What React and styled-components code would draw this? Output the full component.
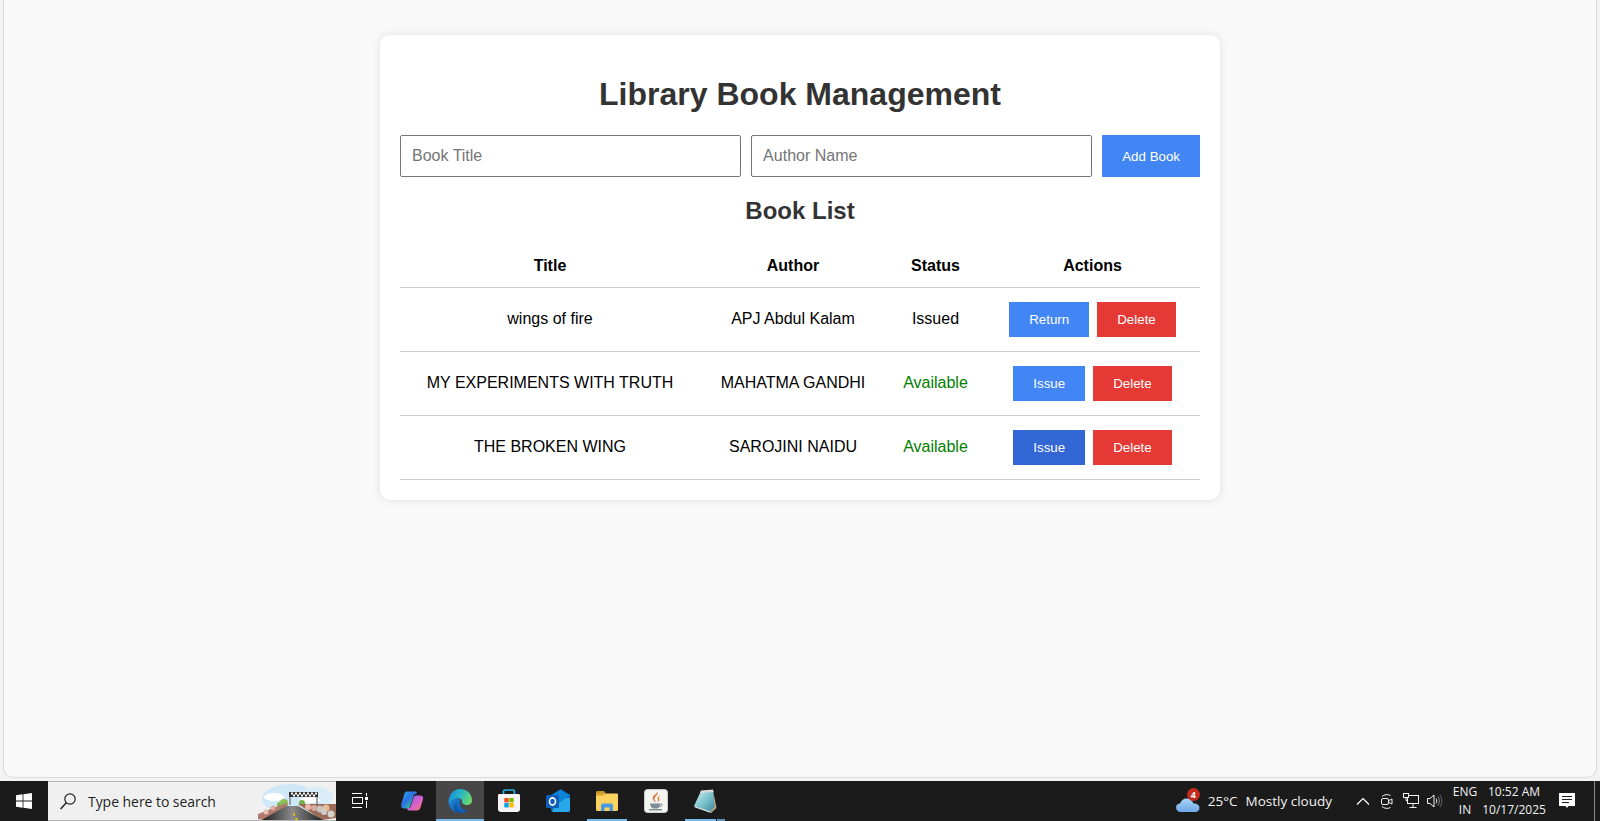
import React from 'react';
import styled, { createGlobalStyle } from 'styled-components';

const GlobalStyle = createGlobalStyle`
  html, body, #root { height: 100%; }
  body {
    margin: 0;
    overflow: hidden;
    background-color: #f3f3f3;
    font-family: "Liberation Sans", Arial, sans-serif;
  }
`;

const Screen = styled.div`
  display: flex;
  flex-direction: column;
  height: 100%;
`;

const BrowserView = styled.main`
  flex: 1;
  margin: 0 3px 3px;
  border: 1px solid #dcdcdc;
  border-top: none;
  border-radius: 0 0 10px 10px;
  padding-top: 35px;
  background-color: #f9f9f9;
`;

const Card = styled.section`
  box-sizing: border-box;
  width: 840px;
  margin: 0 auto;
  border-radius: 10px;
  padding: 20px;
  background-color: #fff;
  box-shadow: 0 0 10px rgba(0, 0, 0, 0.1);
`;

const Title = styled.h1`
  margin: 21px 0 22px;
  font-size: 32px;
  line-height: 37px;
  text-align: center;
  color: #333;
`;

const AddForm = styled.form`
  display: flex;
  gap: 10px;
`;

const TextInput = styled.input`
  flex: 1;
  min-width: 0;
  box-sizing: border-box;
  height: 42px;
  border: 1px solid #767676;
  border-radius: 2px;
  padding: 10px 11px;
  font-family: inherit;
  font-size: 16px;
  background-color: #fff;

  &::placeholder { color: #757575; }
`;

const Button = styled.button`
  border: none;
  padding: 10px 20px;
  font-family: inherit;
  font-size: 13.33px;
  line-height: 15px;
  color: #fff;
  background-color: ${props => props.$bg};
`;

const SubTitle = styled.h2`
  margin: 20px 0 20px;
  font-size: 24px;
  line-height: 28px;
  text-align: center;
  color: #333;
`;

const Table = styled.table`
  width: 800px;
  table-layout: fixed;
  border-collapse: collapse;
  font-size: 16px;
  color: #000;
`;

const HeadCell = styled.th`
  width: ${props => props.$width}px;
  border-bottom: 1px solid #ccc;
  padding: 12px 0 12px;
  line-height: 18px;
  text-align: center;
`;

const Cell = styled.td`
  border-bottom: 1px solid #ccc;
  padding: 14px 0 16px;
  line-height: 18px;
  text-align: center;
  color: ${props => props.$color || '#000'};
`;

const ActionCell = styled.td`
  border-bottom: 1px solid #ccc;
  padding: 14px 0;
`;

const Actions = styled.div`
  display: flex;
  justify-content: center;
  gap: 8px;
`;

const Taskbar = styled.footer`
  display: flex;
  flex: none;
  align-items: stretch;
  height: 40px;
  font-family: "Open Sans", "Noto Sans", sans-serif;
  color: #f2f2f2;
  background-color: #1b1b1b;
`;

const TaskSlot = styled.div`
  position: relative;
  display: flex;
  flex: none;
  align-items: center;
  justify-content: center;
  box-sizing: border-box;
  width: ${props => props.$width || 49}px;
  padding-right: ${props => props.$padRight || 0}px;
  background-color: ${props => (props.$active ? '#474747' : 'transparent')};

  &::after {
    content: '';
    display: ${props => (props.$open ? 'block' : 'none')};
    position: absolute;
    left: ${props => (props.$active ? 0 : 5)}px;
    right: ${props => (props.$active ? 0 : 4)}px;
    bottom: 0;
    height: 2px;
    background: ${props => (props.$stacked
      ? 'linear-gradient(to right, #76b9ed 78%, #1b1b1b 78%, #1b1b1b 80%, #5d95c0 80%)'
      : '#76b9ed')};
  }
`;

const SearchBox = styled.div`
  display: flex;
  flex: none;
  align-items: center;
  justify-content: space-between;
  box-sizing: border-box;
  width: 288px;
  border-top: 1px solid #b5b5b5;
  border-bottom: 1px solid #b5b5b5;
  background-color: #f0f0f0;
`;

const SearchLabel = styled.div`
  display: flex;
  align-items: center;
  gap: 12px;
  padding-left: 12px;
  font-size: 14px;
  letter-spacing: -0.05px;
  color: #1f1f1f;
`;

const Spacer = styled.div`
  flex: 1;
`;

const Weather = styled.div`
  display: flex;
  flex: none;
  align-items: center;
  padding-right: 19px;
  font-size: 13.5px;
`;

const WeatherIcon = styled.div`
  position: relative;
  width: 24px;
  height: 24px;
  margin-right: 8px;
`;

const WeatherBadge = styled.span`
  position: absolute;
  top: -1px;
  right: 0;
  width: 13px;
  height: 13px;
  border-radius: 50%;
  font-size: 9px;
  font-weight: 700;
  line-height: 13px;
  text-align: center;
  color: #fff;
  background-color: #c42b1c;
`;

const WeatherTemp = styled.span`
  margin-right: 8px;
`;

const TrayIcon = styled.div`
  display: flex;
  flex: none;
  align-items: center;
  justify-content: center;
  width: 24px;
`;

const Stack = styled.div`
  display: flex;
  flex: none;
  flex-direction: column;
  align-items: center;
  justify-content: center;
  gap: 2px;
  width: ${props => props.$width}px;
  font-size: 12px;
  line-height: 16px;
`;

const Notify = styled.div`
  display: flex;
  flex: none;
  align-items: center;
  justify-content: center;
  width: 44px;
`;

const ShowDesktop = styled.div`
  flex: none;
  width: 5px;
  margin-left: 5px;
  border-left: 1px solid #8a8a8a;
`;

const WindowsLogo = () => (
  <svg width="16" height="16" viewBox="0 0 16 16" fill="#fff">
    <polygon points="0,2.3 6.6,1.3 6.6,7.6 0,7.6" />
    <polygon points="7.4,1.2 16,0 16,7.6 7.4,7.6" />
    <polygon points="0,8.4 6.6,8.4 6.6,14.7 0,13.7" />
    <polygon points="7.4,8.4 16,8.4 16,16 7.4,14.8" />
  </svg>
);

const SearchGlyph = () => (
  <svg width="16" height="17" viewBox="0 0 16 17" fill="none" stroke="#1f1f1f" strokeWidth="1.2">
    <circle cx="10" cy="6" r="5.2" />
    <line x1="6.3" y1="9.8" x2="0.6" y2="16" strokeWidth="1.5" />
  </svg>
);

const SearchBanner = () => (
  <svg width="78" height="38" viewBox="8 1 78 38">
    <ellipse cx="40" cy="18" rx="28" ry="15" fill="#cfe8f8" />
    <ellipse cx="66" cy="16" rx="17" ry="10" fill="#d8edf9" />
    <ellipse cx="24" cy="16" rx="10" ry="4" fill="#fff" />
    <ellipse cx="60" cy="19" rx="10" ry="3" fill="#fff" />
    <circle cx="30" cy="24" r="3" fill="#7ab648" />
    <circle cx="34" cy="22" r="4" fill="#8cc152" />
    <circle cx="52" cy="22" r="3" fill="#6fb045" />
    <line x1="40" y1="12" x2="40" y2="24" stroke="#555" strokeWidth="1" />
    <line x1="67" y1="12" x2="67" y2="24" stroke="#555" strokeWidth="1" />
    <rect x="39" y="11" width="29" height="5" fill="#333" />
    {[41, 45, 49, 53, 57, 61, 65].map(x => <rect key={x} x={x} y="11.5" width="2" height="2" fill="#fff" />)}
    {[43, 47, 51, 55, 59, 63].map(x => <rect key={x} x={x} y="13.5" width="2" height="2" fill="#fff" />)}
    <polygon points="8,38 8,33 36,22 38,24 14,39" fill="#b07a6c" />
    <polygon points="48,23 86,23 86,37 72,39" fill="#9a6a58" />
    {[[58, 26, 3, '#e6b7a6'], [64, 27, 3, '#d9a9a0'], [70, 28, 3.5, '#c9c4c0'], [76, 27, 3.5, '#e5bc96'], [81, 33, 3.5, '#d4d2cc'], [74, 31, 3, '#cfcdc8'], [16, 31, 2.5, '#e7c3b5'], [23, 27, 2.5, '#dca99b']].map(([x, y, r, c]) => (
      <circle key={x} cx={x} cy={y} r={r} fill={c} />
    ))}
    <defs>
      <linearGradient id="roadFill" x1="0" x2="1" y1="0" y2="0">
        <stop offset="0" stopColor="#181818" />
        <stop offset="0.5" stopColor="#8a8a8a" />
        <stop offset="1" stopColor="#181818" />
      </linearGradient>
    </defs>
    <polygon points="10,40 36,25 48,25 75,40" fill="url(#roadFill)" />
    <rect x="43.5" y="32" width="1.5" height="3" fill="#f2c400" />
    <rect x="45.5" y="37" width="2" height="3" fill="#f2c400" />
  </svg>
);

const TaskViewIcon = () => (
  <svg width="16" height="16" viewBox="0 0 16 16" fill="none" stroke="#fff" strokeWidth="1">
    <path d="M0 0.5H10M0 14.5H10" />
    <rect x="0.5" y="4.5" width="10" height="6" />
    <path d="M14.5 0V3M14.5 8V15" />
    <rect x="13" y="4" width="3" height="3" fill="#fff" stroke="none" />
  </svg>
);

const CopilotIcon = () => (
  <svg width="24" height="24" viewBox="0 0 24 24">
    <defs>
      <linearGradient id="copilotA" x1="0" y1="0" x2="1" y2="1">
        <stop offset="0" stopColor="#22b5e8" />
        <stop offset="0.45" stopColor="#2c6fe6" />
        <stop offset="0.8" stopColor="#36c98c" />
        <stop offset="1" stopColor="#f2d14a" />
      </linearGradient>
      <linearGradient id="copilotB" x1="0" y1="0" x2="1" y2="1">
        <stop offset="0" stopColor="#7a5ce8" />
        <stop offset="0.5" stopColor="#d060d0" />
        <stop offset="0.8" stopColor="#f06a9a" />
        <stop offset="1" stopColor="#f9a14c" />
      </linearGradient>
    </defs>
    <path d="M7 2.5H15.5C16.8 2.5 17 3.6 16.4 4.8C14.8 4.6 13.8 5.6 13.2 7.2L10.8 15.5C10.2 18 9 19.5 7 19.5H4C1.8 19.5 0.6 18 1.2 15.8L4 6C4.6 3.8 5.6 2.5 7 2.5Z" fill="url(#copilotA)" />
    <path d="M16 6.5H20C22.4 6.5 23.6 8 23 10.2L20.5 18.5C19.8 20.6 18.6 21.5 17 21.5H8.5C7.2 21.5 7 20.4 7.6 19.2C9.4 19.4 10.4 18.4 11 16.8L13.4 8.6C13.8 7.2 14.6 6.5 16 6.5Z" fill="url(#copilotB)" />
  </svg>
);

const EdgeIcon = () => (
  <svg width="24" height="24" viewBox="0 0 24 24">
    <defs>
      <linearGradient id="edgeTop" x1="0" y1="0.3" x2="1" y2="0.6">
        <stop offset="0" stopColor="#1a8fd8" />
        <stop offset="0.45" stopColor="#25b3c8" />
        <stop offset="1" stopColor="#6fdc6a" />
      </linearGradient>
      <linearGradient id="edgeLow" x1="0" y1="0" x2="1" y2="1">
        <stop offset="0" stopColor="#1c86d4" />
        <stop offset="1" stopColor="#0f56ad" />
      </linearGradient>
    </defs>
    <path d="M12 0C19 0 24 5 24 11.5C24 14.5 21 16.5 18 16C15 15.5 13.5 14 14 12C14.4 10 11 8.5 8 9.5C4 10.8 2 14 1 16C-1 8 4.5 0 12 0Z" fill="url(#edgeTop)" />
    <path d="M1 16C2 12.5 5 9.5 9 9.5C11.5 9.5 12.8 10.8 12.2 12.5C10.8 16 13 20.5 19.5 21.5C17.5 23.2 15 24 12 24C7 24 2.6 20.8 1 16Z" fill="url(#edgeLow)" />
    <path d="M9 12.5C7.5 16 9 20.5 13.5 23.8C12.5 24 10.5 24 9 23.6C5.5 21.5 4.5 16 9 12.5Z" fill="#0b4796" opacity="0.55" />
  </svg>
);

const StoreIcon = () => (
  <svg width="24" height="24" viewBox="0 0 24 24">
    <path d="M6.5 6V2.5C6.5 1.6 7 1 8 1H16C17 1 17.5 1.6 17.5 2.5V6" fill="none" stroke="#2ab0e8" strokeWidth="1.7" />
    <path d="M1 6.5C1 5.7 1.5 5 2.3 5H21.7C22.5 5 23 5.7 23 6.5V20C23 22 22 23 20 23H4C2 23 1 22 1 20Z" fill="#f4f4f4" />
    <rect x="7.3" y="9" width="4.4" height="4.4" fill="#f25022" />
    <rect x="12.3" y="9" width="4.4" height="4.4" fill="#7fba00" />
    <rect x="7.3" y="14" width="4.4" height="4.4" fill="#00a4ef" />
    <rect x="12.3" y="14" width="4.4" height="4.4" fill="#ffb900" />
  </svg>
);

const OutlookIcon = () => (
  <svg width="24" height="24" viewBox="0 0 24 24">
    <path d="M5 6L14 0.5C14.6 0.2 15 0.2 15.6 0.5L24 6V21C24 22.2 23 23 22 23H8C6.5 23 5 22 5 20Z" fill="#0f6cbd" />
    <path d="M14 9H24V21C24 22.2 23 23 22 23H8C7 23 6.4 22.6 6 22Z" fill="#28a8ea" />
    <path d="M24 6L13 14L8 10V5L14 1L24 6Z" fill="#0a86d8" />
    <rect x="0" y="6" width="13" height="13" rx="1" fill="#0f5fb8" />
    <ellipse cx="6.5" cy="12.5" rx="3" ry="3.6" fill="none" stroke="#fff" strokeWidth="1.6" />
  </svg>
);

const ExplorerIcon = () => (
  <svg width="22" height="20" viewBox="0 0 22 20">
    <path d="M0 1.5C0 0.6 0.6 0 1.5 0H8L10 2.5H0Z" fill="#c99526" />
    <path d="M0 2.5H21C21.6 2.5 22 3 22 3.6V18.5C22 19.4 21.4 20 20.5 20H1.5C0.6 20 0 19.4 0 18.5Z" fill="#fbd25f" />
    <path d="M0 2.5H9L7 5H0Z" fill="#e6ac33" />
    <path d="M5 20V14.5C5 13.2 5.8 12.5 7 12.5H15C16.2 12.5 17 13.2 17 14.5V20H13.5V16.5H8.5V20Z" fill="#4a9ae0" />
  </svg>
);

const JavaIcon = () => (
  <svg width="24" height="24" viewBox="0 0 24 24">
    <rect x="0.5" y="0.5" width="23" height="23" rx="3" fill="#f5f5f0" stroke="#c8ccd0" />
    <path d="M13.5 2.5C15 6 9.5 7.5 10.5 10.5C11 11.8 12 12.6 12.4 13.4C10.6 12.4 8.4 10.8 8.8 8.4C9.2 6 13 5.4 13.5 2.5Z" fill="#e0652a" />
    <path d="M16 6C14 7.2 13 8.8 13.6 10.4C14 11.4 14 12.4 13.4 13.4C15.4 12.2 15.8 11 15.2 9.6C14.8 8.4 15 7.2 16 6Z" fill="#e88a45" />
    <path d="M6 14.5H16.5C16.5 17.2 15 18.8 13.5 19.4H9C7.5 18.8 6 17.2 6 14.5Z" fill="#7d8c97" />
    <path d="M16.5 14.8C19 14.2 19.4 16.8 15.6 17.8" fill="none" stroke="#7d8c97" strokeWidth="1" />
    <path d="M5 20.8H18" stroke="#65757f" strokeWidth="1.2" />
  </svg>
);

const NotepadIcon = () => (
  <svg width="24" height="24" viewBox="0 0 24 24">
    <defs>
      <linearGradient id="padFill" x1="0" y1="0" x2="1" y2="1">
        <stop offset="0" stopColor="#d4eff0" />
        <stop offset="0.5" stopColor="#7ec6cf" />
        <stop offset="1" stopColor="#37859b" />
      </linearGradient>
    </defs>
    <polygon points="8,2 20,1 22,18 17,23 1,17" fill="url(#padFill)" />
    <polygon points="8,1.5 20,0.5 20.5,3 7,4" fill="#d8d8d8" />
    <polygon points="20,1 23.5,19 18,24 18,21.5 21.5,18" fill="#b9a684" />
    <polygon points="1,17 17.5,22.5 18,24 2,18.5" fill="#e8e8e8" />
  </svg>
);

const CloudIcon = () => (
  <svg width="24" height="24" viewBox="0 0 24 24">
    <defs>
      <linearGradient id="cloudFill" x1="0" y1="0" x2="0" y2="1">
        <stop offset="0" stopColor="#a9d3f8" />
        <stop offset="1" stopColor="#6ea8e6" />
      </linearGradient>
    </defs>
    <path d="M5 23C2 23 0 21 0 18.5C0 16 2 14.5 4 14.5C5 11.5 7.5 9.5 10.5 9.5C14 9.5 16.5 11.5 17.5 14.5C20 14 23.5 15.5 23.5 19C23.5 21.5 21.5 23 19.5 23Z" fill="url(#cloudFill)" />
  </svg>
);

const ChevronIcon = () => (
  <svg width="14" height="8" viewBox="0 0 14 8" fill="none" stroke="#fff" strokeWidth="1.2">
    <path d="M1 7.5L7 1.5L13 7.5" />
  </svg>
);

const MeetIcon = () => (
  <svg width="12" height="17" viewBox="0 0 12 17" fill="none" stroke="#f2f2f2" strokeWidth="1">
    <path d="M1 3.5C2.5 1.5 7.5 1 9.5 2.5M1 13.5C2.5 15.5 7.5 16 9.5 14.5" />
    <rect x="0.5" y="5.5" width="7" height="6" rx="1.5" />
    <path d="M8 7.5L11 6V11L8 9.5" />
  </svg>
);

const NetworkIcon = () => (
  <svg width="16" height="16" viewBox="0 0 16 16" fill="none" stroke="#f2f2f2" strokeWidth="1">
    <rect x="4.5" y="2.5" width="11" height="8" />
    <path d="M10 10.5V14.5M6.5 14.5H13.5" />
    <rect x="0.5" y="0.5" width="5" height="4" fill="#1b1b1b" />
    <path d="M3 4.5V7.5H4.5" />
  </svg>
);

const VolumeIcon = () => (
  <svg width="16" height="16" viewBox="0 0 16 16" fill="none" stroke="#f2f2f2" strokeWidth="1">
    <path d="M0.5 5.5H3L7 2V14L3 10.5H0.5Z" />
    <path d="M9 5.5C10 7 10 9 9 10.5" />
    <path d="M11 3.5C12.8 6 12.8 10 11 12.5" stroke="#8a8a8a" />
    <path d="M13 2C15.4 5.5 15.4 10.5 13 14" stroke="#6a6a6a" />
  </svg>
);

const NotificationIcon = () => (
  <svg width="16" height="16" viewBox="0 0 16 16" fill="#fff">
    <path d="M0 0H16V13H9.5L8 15L6.5 13H0Z" />
    <path d="M3 3.5H13M3 6.5H13M3 9.5H10" stroke="#1b1b1b" strokeWidth="1" />
  </svg>
);

const BLUE = '#4285f4';
const RED = '#e53935';

const books = [
  { title: 'wings of fire', author: 'APJ Abdul Kalam', status: 'Issued', action: 'Return' },
  { title: 'MY EXPERIMENTS WITH TRUTH', author: 'MAHATMA GANDHI', status: 'Available', action: 'Issue' },
  { title: 'THE BROKEN WING', author: 'SAROJINI NAIDU', status: 'Available', action: 'Issue', hovered: true },
];

export default function App() {
  return (
    <Screen>
      <GlobalStyle />
      <BrowserView>
        <Card>
          <Title>Library Book Management</Title>
          <AddForm onSubmit={e => e.preventDefault()}>
            <TextInput placeholder="Book Title" />
            <TextInput placeholder="Author Name" />
            <Button $bg={BLUE}>Add Book</Button>
          </AddForm>
          <SubTitle>Book List</SubTitle>
          <Table>
            <thead>
              <tr>
                <HeadCell $width={300}>Title</HeadCell>
                <HeadCell $width={186}>Author</HeadCell>
                <HeadCell $width={99}>Status</HeadCell>
                <HeadCell $width={215}>Actions</HeadCell>
              </tr>
            </thead>
            <tbody>
              {books.map(book => (
                <tr key={book.title}>
                  <Cell>{book.title}</Cell>
                  <Cell>{book.author}</Cell>
                  <Cell $color={book.status === 'Available' ? 'green' : '#000'}>{book.status}</Cell>
                  <ActionCell>
                    <Actions>
                      <Button $bg={book.hovered ? '#3367d6' : BLUE}>{book.action}</Button>
                      <Button $bg={RED}>Delete</Button>
                    </Actions>
                  </ActionCell>
                </tr>
              ))}
            </tbody>
          </Table>
        </Card>
      </BrowserView>
      <Taskbar>
        <TaskSlot $width={48}><WindowsLogo /></TaskSlot>
        <SearchBox>
          <SearchLabel><SearchGlyph />Type here to search</SearchLabel>
          <SearchBanner />
        </SearchBox>
        <TaskSlot $width={51} $padRight={3}><TaskViewIcon /></TaskSlot>
        <TaskSlot><CopilotIcon /></TaskSlot>
        <TaskSlot $width={48} $active $open><EdgeIcon /></TaskSlot>
        <TaskSlot><StoreIcon /></TaskSlot>
        <TaskSlot><OutlookIcon /></TaskSlot>
        <TaskSlot $open><ExplorerIcon /></TaskSlot>
        <TaskSlot><JavaIcon /></TaskSlot>
        <TaskSlot $open $stacked><NotepadIcon /></TaskSlot>
        <Spacer />
        <Weather>
          <WeatherIcon>
            <CloudIcon />
            <WeatherBadge>4</WeatherBadge>
          </WeatherIcon>
          <WeatherTemp>25°C</WeatherTemp>
          <span>Mostly cloudy</span>
        </Weather>
        <TrayIcon><ChevronIcon /></TrayIcon>
        <TrayIcon><MeetIcon /></TrayIcon>
        <TrayIcon><NetworkIcon /></TrayIcon>
        <TrayIcon><VolumeIcon /></TrayIcon>
        <Stack $width={36}><span>ENG</span><span>IN</span></Stack>
        <Stack $width={62}><span>10:52 AM</span><span>10/17/2025</span></Stack>
        <Notify><NotificationIcon /></Notify>
        <ShowDesktop />
      </Taskbar>
    </Screen>
  );
}
